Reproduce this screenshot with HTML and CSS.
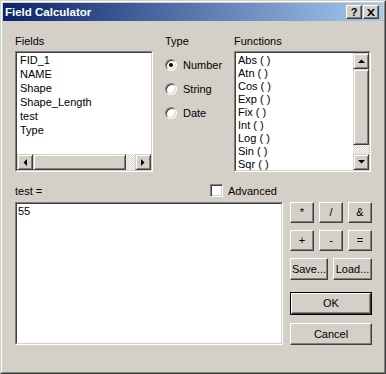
FILE: index.html
```html
<!DOCTYPE html>
<html>
<head>
<meta charset="utf-8">
<link rel="stylesheet" href="styles.css">
</head>
<body>
<div class="window">
  <div class="frame">
    <div class="titlebar">
      <span class="title">Field Calculator</span>
      <div class="tbtns">
        <span class="tbtn help">?</span>
        <span class="tbtn close"><svg width="8" height="7" viewBox="0 0 8 7"><path d="M0 0h2l2 2.2 2-2.2h2l-3 3.5 3 3.5h-2l-2-2.2-2 2.2h-2l3-3.5z" fill="#000"/></svg></span>
      </div>
    </div>
    <div class="client">
      <div class="top">
        <div class="fields-col">
          <div class="label">Fields</div>
          <div class="listbox fields">
            <div class="lb-inner">
              <div class="items fitems">
                <div>FID_1</div>
                <div>NAME</div>
                <div>Shape</div>
                <div>Shape_Length</div>
                <div>test</div>
                <div>Type</div>
              </div>
              <div class="hscroll">
                <span class="sbtn"><svg width="4" height="7" viewBox="0 0 4 7"><path d="M4 0v7L0.5 3.5z" fill="#000"/></svg></span>
                <span class="thumb hthumb"></span>
                <span class="track"></span>
                <span class="sbtn"><svg width="4" height="7" viewBox="0 0 4 7"><path d="M0 0v7L3.5 3.5z" fill="#000"/></svg></span>
              </div>
            </div>
          </div>
        </div>
        <div class="type-col">
          <div class="label">Type</div>
          <div class="radios">
            <div class="radio-row"><span class="radio checked"></span><span>Number</span></div>
            <div class="radio-row"><span class="radio"></span><span>String</span></div>
            <div class="radio-row"><span class="radio"></span><span>Date</span></div>
          </div>
        </div>
        <div class="func-col">
          <div class="label">Functions</div>
          <div class="listbox funcs">
            <div class="lb-inner row">
              <div class="items ditems">
                <div>Abs ( )</div>
                <div>Atn ( )</div>
                <div>Cos ( )</div>
                <div>Exp ( )</div>
                <div>Fix ( )</div>
                <div>Int ( )</div>
                <div>Log ( )</div>
                <div>Sin ( )</div>
                <div>Sqr ( )</div>
              </div>
              <div class="vscroll">
                <span class="sbtn"><svg width="7" height="4" viewBox="0 0 7 4"><path d="M0 4h7L3.5 0.5z" fill="#000"/></svg></span>
                <span class="thumb vthumb"></span>
                <span class="track"></span>
                <span class="sbtn"><svg width="7" height="4" viewBox="0 0 7 4"><path d="M0 0h7L3.5 3.5z" fill="#000"/></svg></span>
              </div>
            </div>
          </div>
        </div>
      </div>
      <div class="mid">
        <span class="expr-label">test =</span>
        <span class="check"><span class="box"></span><span>Advanced</span></span>
      </div>
      <div class="bottom">
        <div class="expr"><div class="expr-inner">55</div></div>
        <div class="side">
          <div class="ops">
            <span class="btn">*</span>
            <span class="btn">/</span>
            <span class="btn">&amp;</span>
            <span class="btn">+</span>
            <span class="btn">-</span>
            <span class="btn">=</span>
          </div>
          <div class="saveload">
            <span class="btn">Save...</span>
            <span class="btn">Load...</span>
          </div>
          <div class="btn-default"><span class="btn full">OK</span></div>
          <span class="btn full cancel">Cancel</span>
        </div>
      </div>
    </div>
  </div>
</div>
</body>
</html>
```

FILE: styles.css
```css
* { box-sizing: border-box; }
html, body { margin: 0; padding: 0; background: #d4d0c8; }
body {
  font-family: "Liberation Sans", Arial, sans-serif;
  font-size: 11px;
  color: #000;
}
.window {
  width: 386px;
  height: 374px;
  border: 1px solid;
  border-color: #d4d0c8 #404040 #404040 #d4d0c8;
  background: #d4d0c8;
}
.frame {
  height: 100%;
  border: 1px solid;
  border-color: #fff #808080 #808080 #fff;
  padding: 1px;
}
.titlebar {
  height: 18px;
  background: linear-gradient(to right, #0a246a, #a6caf0);
  display: flex;
  align-items: center;
  justify-content: space-between;
  padding: 0 4px 0 2px;
}
.title {
  color: #fff;
  font-weight: bold;
  font-size: 11.5px;
  line-height: 18px;
}
.tbtns { display: flex; gap: 1px; }
.tbtn {
  width: 16px;
  height: 14px;
  background: #d4d0c8;
  border: 1px solid;
  border-color: #fff #404040 #404040 #fff;
  box-shadow: inset -1px -1px #808080;
  display: flex;
  align-items: center;
  justify-content: center;
  font-weight: bold;
  font-size: 11px;
  line-height: 12px;
}
.client {
  padding: 13px 0 0 12px;
}
.top { display: flex; }
.fields-col { width: 138px; }
.type-col { width: 69px; margin-left: 12px; }
.func-col { width: 137px; }
.label {
  height: 14px;
  line-height: 14px;
  margin-bottom: 3px;
}
.listbox {
  height: 121px;
  border: 1px solid;
  border-color: #808080 #fff #fff #808080;
}
.lb-inner {
  height: 100%;
  border: 1px solid;
  border-color: #404040 #d4d0c8 #d4d0c8 #404040;
  background: #fff;
  display: flex;
  flex-direction: column;
}
.lb-inner.row { flex-direction: row; }
.items { overflow: hidden; white-space: nowrap; }
.fitems {
  height: 101px;
  padding-left: 3px;
  line-height: 14px;
}
.ditems {
  flex: 1;
  padding: 1px 0 0 2px;
  line-height: 13px;
}
.hscroll { display: flex; height: 16px; }
.vscroll { display: flex; flex-direction: column; width: 16px; }
.sbtn {
  width: 16px;
  height: 16px;
  flex: none;
  background: #d4d0c8;
  border: 1px solid;
  border-color: #d4d0c8 #404040 #404040 #d4d0c8;
  box-shadow: inset 1px 1px #fff, inset -1px -1px #808080;
  display: flex;
  align-items: center;
  justify-content: center;
}
.sbtn svg { display: block; }
.thumb {
  flex: none;
  background: #d4d0c8;
  border: 1px solid;
  border-color: #d4d0c8 #404040 #404040 #d4d0c8;
  box-shadow: inset 1px 1px #fff, inset -1px -1px #808080;
}
.hthumb { width: 93px; height: 16px; }
.vthumb { height: 76px; width: 16px; }
.track {
  flex: 1;
  background: repeating-conic-gradient(#fff 0 25%, #d4d0c8 0 50%) 0 0 / 2px 2px;
}
.radios { padding-top: 2px; }
.radio-row {
  height: 24px;
  display: flex;
  align-items: center;
  gap: 6px;
}
.radio {
  width: 12px;
  height: 12px;
  border-radius: 50%;
  border: 1px solid;
  border-color: #808080 #fff #fff #808080;
  box-shadow: inset 1px 1px #404040, inset -1px -1px #d4d0c8;
  background: #fff;
  display: flex;
  align-items: center;
  justify-content: center;
  flex: none;
}
.radio.checked::after {
  content: "";
  width: 4px;
  height: 4px;
  border-radius: 50%;
  background: #000;
}
.mid {
  margin-top: 12px;
  height: 13px;
  display: flex;
  align-items: center;
}
.expr-label { width: 195px; }
.check { display: flex; align-items: center; gap: 5px; }
.box {
  width: 13px;
  height: 13px;
  border: 1px solid;
  border-color: #808080 #fff #fff #808080;
  box-shadow: inset 1px 1px #404040, inset -1px -1px #d4d0c8;
  background: #fff;
}
.bottom {
  margin-top: 5px;
  display: flex;
}
.expr {
  width: 268px;
  height: 143px;
  border: 1px solid;
  border-color: #808080 #fff #fff #808080;
}
.expr-inner {
  height: 100%;
  border: 1px solid;
  border-color: #404040 #d4d0c8 #d4d0c8 #404040;
  background: #fff;
  padding: 1px 0 0 1px;
  line-height: 13px;
}
.side {
  width: 82px;
  margin-left: 7px;
  display: flex;
  flex-direction: column;
}
.ops {
  display: grid;
  grid-template-columns: 24px 24px 24px;
  grid-auto-rows: 21px;
  column-gap: 5px;
  row-gap: 7px;
}
.saveload {
  margin-top: 7px;
  display: grid;
  grid-template-columns: 38px 39px;
  column-gap: 5px;
  height: 22px;
}
.btn {
  background: #d4d0c8;
  border: 1px solid;
  border-color: #fff #404040 #404040 #fff;
  box-shadow: inset -1px -1px #808080;
  display: flex;
  align-items: center;
  justify-content: center;
  line-height: 13px;
  white-space: nowrap;
}
.btn-default {
  margin-top: 12px;
  height: 23px;
  border: 1px solid #000;
  display: flex;
}
.btn.full { flex: 1; }
.cancel {
  margin-top: 8px;
  height: 22px;
}
```
